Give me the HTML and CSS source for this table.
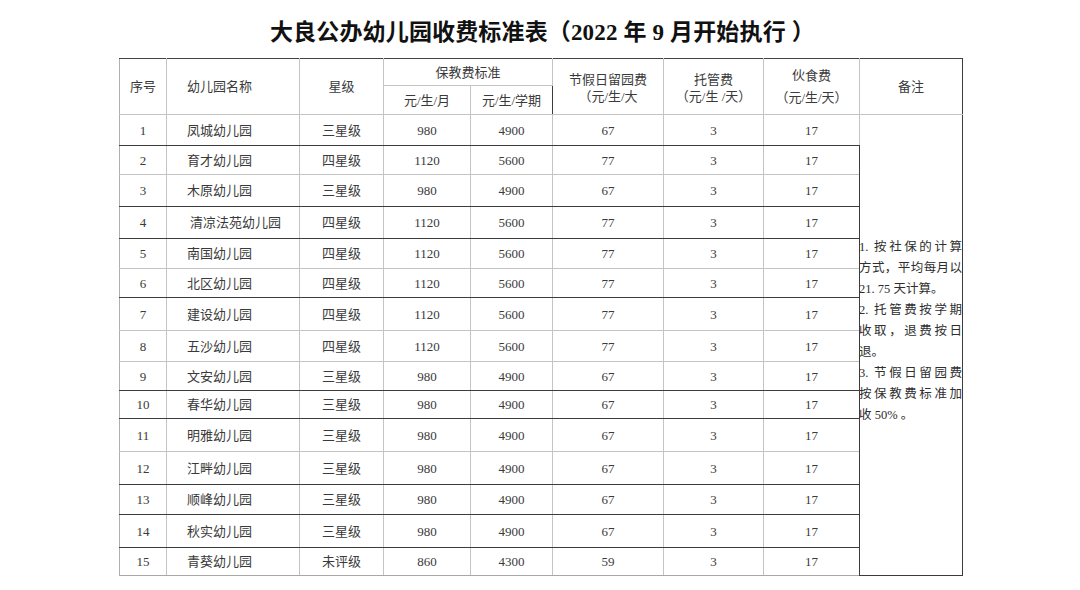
FILE: index.html
```html
<!DOCTYPE html>
<html lang="zh-CN">
<head>
<meta charset="utf-8">
<title>大良公办幼儿园收费标准表</title>
<link rel="stylesheet" href="styles.css">
</head>
<body>
<div class="page">
  <h1 class="title">大良公办幼儿园收费标准表（2022 年 9 月开始执行<span class="gap"></span>）</h1>
  <table class="fees">
    <colgroup>
      <col class="c1"><col class="c2"><col class="c3"><col class="c4"><col class="c5"><col class="c6"><col class="c7"><col class="c8"><col class="c9">
    </colgroup>
    <thead>
      <tr class="h1">
        <th rowspan="2" class="b-l">序号</th>
        <th rowspan="2" class="name-h">幼儿园名称</th>
        <th rowspan="2">星级</th>
        <th colspan="2" class="dkl">保教费标准</th>
        <th rowspan="2" class="dkl two">节假日留园费<br>（元/生/大</th>
        <th rowspan="2" class="two">托管费<br>（元/生 /天）</th>
        <th rowspan="2" class="dkl two wide">伙食费<br>（元/生/天）</th>
        <th rowspan="2" class="dkl b-r">备注</th>
      </tr>
      <tr class="h2">
        <th class="dkl">元/生/月</th>
        <th class="dkl">元/生/学期</th>
      </tr>
    </thead>
    <tbody>
      <tr class="r1 dk"><td class="b-l">1</td><td class="nm">凤城幼儿园</td><td>三星级</td><td class="dkl">980</td><td class="dkl">4900</td><td class="dkl">67</td><td>3</td><td class="dkl">17</td>
        <td rowspan="15" class="note dkl b-r">
          <span class="ln j">1. 按社保的计算</span>
          <span class="ln j">方式，平均每月以</span>
          <span class="ln">21. 75 天计算。</span>
          <span class="ln j">2. 托管费按学期</span>
          <span class="ln j">收取，退费按日</span>
          <span class="ln">退。</span>
          <span class="ln j">3. 节假日留园费</span>
          <span class="ln j">按保教费标准加</span>
          <span class="ln">收 50% 。</span>
        </td>
      </tr>
      <tr class="r2"><td class="b-l">2</td><td class="nm">育才幼儿园</td><td>四星级</td><td class="dkl">1120</td><td class="dkl">5600</td><td class="dkl">77</td><td>3</td><td class="dkl">17</td></tr>
      <tr class="r3 dk"><td class="b-l">3</td><td class="nm">木原幼儿园</td><td>三星级</td><td class="dkl">980</td><td class="dkl">4900</td><td class="dkl">67</td><td>3</td><td class="dkl">17</td></tr>
      <tr class="r4 dk"><td class="b-l">4</td><td class="nm nm4">清凉法苑幼儿园</td><td>四星级</td><td class="dkl">1120</td><td class="dkl">5600</td><td class="dkl">77</td><td>3</td><td class="dkl">17</td></tr>
      <tr class="r5"><td class="b-l">5</td><td class="nm">南国幼儿园</td><td>四星级</td><td class="dkl">1120</td><td class="dkl">5600</td><td class="dkl">77</td><td>3</td><td class="dkl">17</td></tr>
      <tr class="r6 dk"><td class="b-l">6</td><td class="nm">北区幼儿园</td><td>四星级</td><td class="dkl">1120</td><td class="dkl">5600</td><td class="dkl">77</td><td>3</td><td class="dkl">17</td></tr>
      <tr class="r7"><td class="b-l">7</td><td class="nm">建设幼儿园</td><td>四星级</td><td class="dkl">1120</td><td class="dkl">5600</td><td class="dkl">77</td><td>3</td><td class="dkl">17</td></tr>
      <tr class="r8"><td class="b-l">8</td><td class="nm">五沙幼儿园</td><td>四星级</td><td class="dkl">1120</td><td class="dkl">5600</td><td class="dkl">77</td><td>3</td><td class="dkl">17</td></tr>
      <tr class="r9 dk"><td class="b-l">9</td><td class="nm">文安幼儿园</td><td>三星级</td><td class="dkl">980</td><td class="dkl">4900</td><td class="dkl">67</td><td>3</td><td class="dkl">17</td></tr>
      <tr class="r10 dk"><td class="b-l">10</td><td class="nm">春华幼儿园</td><td>三星级</td><td class="dkl">980</td><td class="dkl">4900</td><td class="dkl">67</td><td>3</td><td class="dkl">17</td></tr>
      <tr class="r11"><td class="b-l">11</td><td class="nm">明雅幼儿园</td><td>三星级</td><td class="dkl">980</td><td class="dkl">4900</td><td class="dkl">67</td><td>3</td><td class="dkl">17</td></tr>
      <tr class="r12 dk"><td class="b-l">12</td><td class="nm">江畔幼儿园</td><td>三星级</td><td class="dkl">980</td><td class="dkl">4900</td><td class="dkl">67</td><td>3</td><td class="dkl">17</td></tr>
      <tr class="r13 dk"><td class="b-l">13</td><td class="nm">顺峰幼儿园</td><td>三星级</td><td class="dkl">980</td><td class="dkl">4900</td><td class="dkl">67</td><td>3</td><td class="dkl">17</td></tr>
      <tr class="r14 dk"><td class="b-l">14</td><td class="nm">秋实幼儿园</td><td>三星级</td><td class="dkl">980</td><td class="dkl">4900</td><td class="dkl">67</td><td>3</td><td class="dkl">17</td></tr>
      <tr class="r15 last"><td class="b-l">15</td><td class="nm">青葵幼儿园</td><td>未评级</td><td class="dkl">860</td><td class="dkl">4300</td><td class="dkl">59</td><td>3</td><td class="dkl">17</td></tr>
    </tbody>
  </table>
</div>
</body>
</html>
```

FILE: styles.css
```css
html, body {
  margin: 0;
  padding: 0;
  background: #ffffff;
}

body {
  width: 1080px;
  height: 590px;
  overflow: hidden;
  font-family: "Liberation Serif", "Noto Sans CJK SC", serif;
  color: #3a3a3a;
}

.page {
  display: flex;
  flex-direction: column;
  align-items: flex-start;
  padding-left: 119px;
}

.title {
  margin: 0;
  width: 843px;
  height: 58px;
  display: flex;
  align-items: center;
  justify-content: center;
  padding-top: 2px;
  padding-left: 4px;
  box-sizing: border-box;
  font-family: "Liberation Serif", "Noto Sans CJK SC", serif;
  font-weight: bold;
  font-size: 23px;
  color: #111111;
  letter-spacing: 0.15px;
}

.title .gap {
  display: inline-block;
  width: 6px;
}

.fees {
  border-collapse: collapse;
  table-layout: fixed;
  width: 843px;
  font-size: 13px;
}

.c1 { width: 47px; }
.c2 { width: 133px; }
.c3 { width: 84px; }
.c4 { width: 87px; }
.c5 { width: 82px; }
.c6 { width: 111px; }
.c7 { width: 100px; }
.c8 { width: 96px; }
.c9 { width: 103px; }

.fees th,
.fees td {
  border: 1px solid #c4c4c4;
  padding: 0;
  text-align: center;
  vertical-align: middle;
  font-weight: normal;
  line-height: 17px;
  white-space: nowrap;
  overflow: hidden;
}

.fees thead tr.h1 th {
  border-top: 1px solid #444444;
}

.fees tr.h1 { height: 27px; }
.fees tr.h2 { height: 29px; }

.fees th.two {
  padding-top: 2px;
  line-height: 17px;
}

.fees th.two.wide {
  padding-top: 0;
  line-height: 22px;
}

.fees th.name-h {
  text-align: left;
  padding-left: 20px;
}

.fees .dkl { border-left-color: #3c3c3c; }
.fees .b-l { border-left-color: #b0b0b0; }
.fees .b-r { border-right-color: #3c3c3c; }

.fees tr.dk td { border-bottom-color: #3c3c3c; }
.fees tr.last td { border-bottom-color: #a8a8a8; }

.fees td.nm {
  text-align: left;
  padding-left: 20px;
}
.fees td.nm4 { padding-left: 23px; }

.r1 { height: 31px; }
.r2 { height: 29px; }
.r3 { height: 32px; }
.r4 { height: 32px; }
.r5 { height: 30px; }
.r6 { height: 29px; }
.r7 { height: 33px; }
.r8 { height: 31px; }
.r9 { height: 29px; }
.r10 { height: 28px; }
.r11 { height: 33px; }
.r12 { height: 33px; }
.r13 { height: 30px; }
.r14 { height: 33px; }
.r15 { height: 28px; }

.fees td.note {
  text-align: left;
  white-space: normal;
  vertical-align: middle;
  padding: 0 0 27px 0;
  border-bottom-color: #a8a8a8;
  border-top-color: #c4c4c4;
  color: #2e2e2e;
}

.note .ln {
  display: block;
  line-height: 21px;
  font-size: 12.5px;
  margin-left: -1px;
  text-align: left;
}

.note .ln.j {
  text-align: justify;
  text-align-last: justify;
}
```
